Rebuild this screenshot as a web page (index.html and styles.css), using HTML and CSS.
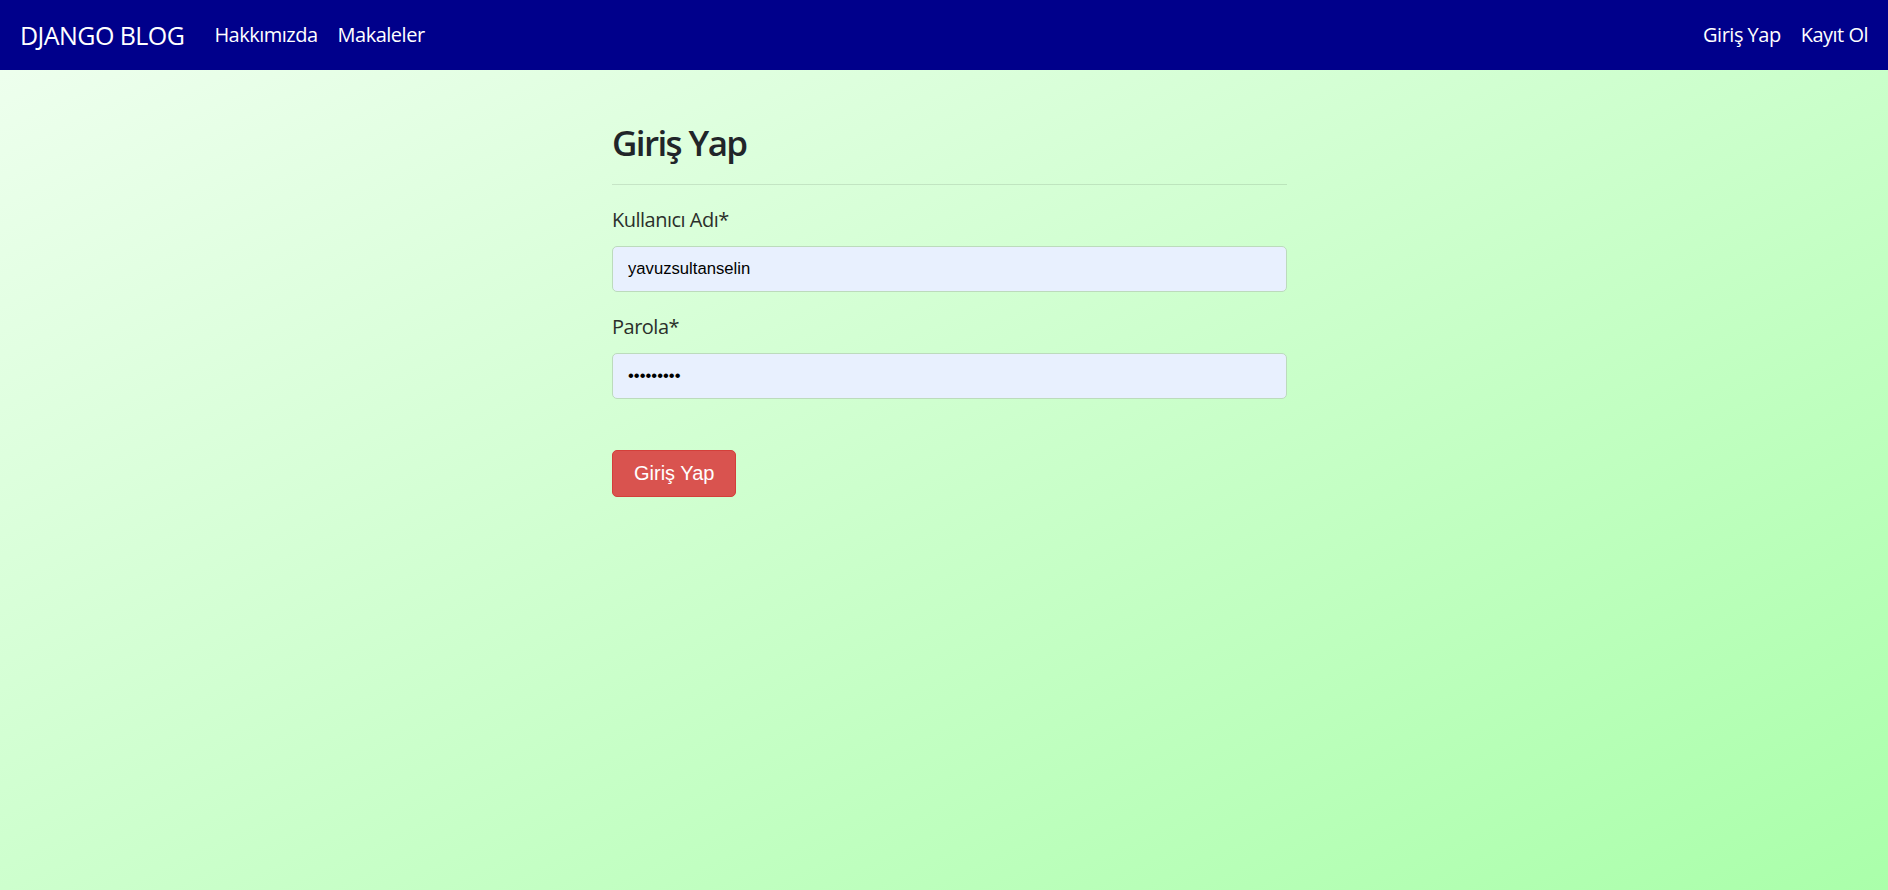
FILE: index.html
```html
<!DOCTYPE html>
<html lang="tr">
<head>
<meta charset="utf-8">
<title>Giriş Yap</title>
<link rel="stylesheet" href="styles.css">
</head>
<body>
<nav class="navbar">
  <a class="brand" href="#">DJANGO BLOG</a>
  <ul class="nav">
    <li><a href="#">Hakkımızda</a></li>
    <li><a href="#">Makaleler</a></li>
  </ul>
  <ul class="nav nav-right">
    <li><a href="#">Giriş Yap</a></li>
    <li><a href="#">Kayıt Ol</a></li>
  </ul>
</nav>
<main class="container">
  <h3 class="title">Giriş Yap</h3>
  <hr class="divider">
  <form class="form">
    <div class="group">
      <label class="label" for="username">Kullanıcı Adı*</label>
      <input class="input" id="username" type="text" value="yavuzsultanselin">
    </div>
    <div class="group">
      <label class="label" for="password">Parola*</label>
      <input class="input" id="password" type="password" value="123456789">
    </div>
    <button class="btn" type="button">Giriş Yap</button>
  </form>
</main>
</body>
</html>
```
FILE: styles.css
```css
* { box-sizing: border-box; }
html, body { margin: 0; padding: 0; }
body {
  min-height: 890px;
  font-family: "Open Sans", "Noto Sans", sans-serif;
  color: #212529;
  background: linear-gradient(to bottom right, #f0fff0, #aaffaa);
}
.navbar {
  height: 70px;
  background: #00008b;
  display: flex;
  align-items: center;
  padding: 0 10px 0 20px;
}
.brand {
  color: #fff;
  text-decoration: none;
  font-size: 25px;
  line-height: 1;
  letter-spacing: -0.55px;
  margin-right: 20px;
}
.nav {
  list-style: none;
  margin: 0;
  padding: 0;
  display: flex;
}
.nav-right { margin-left: auto; }
.nav a {
  display: block;
  color: #fff;
  text-decoration: none;
  font-size: 20px;
  line-height: 1;
  letter-spacing: -0.5px;
  padding: 0 10px;
}
.container {
  width: 675px;
  margin-left: calc(50% - 332px);
  padding-top: 52px;
}
.title {
  margin: 0;
  font-size: 35px;
  line-height: 42px;
  font-weight: 600;
  letter-spacing: -1.6px;
}
.divider {
  margin: 20px 0;
  border: 0;
  border-top: 1px solid rgba(0, 0, 0, 0.1);
}
.group { margin-bottom: 20px; display: flex; flex-direction: column; }
.label {
  font-size: 20px;
  line-height: 30px;
  letter-spacing: -0.5px;
  color: #2b2f2b;
  margin-bottom: 11px;
}
.input {
  height: 46px;
  width: 100%;
  padding: 0 15px;
  font-family: "Liberation Sans", Arial, sans-serif;
  font-size: 16.67px;
  color: #000;
  background: #e8f0fe;
  border: 1px solid #bcdbbc;
  border-radius: 5px;
}
.btn {
  margin-top: 31px;
  height: 47px;
  padding: 0 21px;
  font-family: "Liberation Sans", Arial, sans-serif;
  font-size: 20px;
  color: #fff;
  background: #d9534f;
  border: 1px solid #d43f3a;
  border-radius: 5px;
}
```
